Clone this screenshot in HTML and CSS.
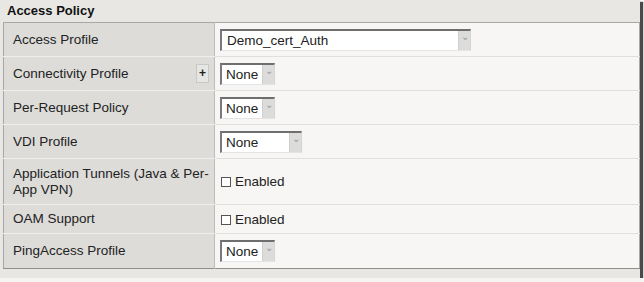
FILE: index.html
```html
<!DOCTYPE html>
<html lang="en">
<head>
  <meta charset="UTF-8" />
  <title>Access Policy</title>
  <link rel="stylesheet" href="styles.css">
</head>
<body>

<div class="panel">
  <h3 class="panel-title">Access Policy</h3>
  <table class="settings">
    <tr class="row">
      <td class="label">Access Profile</td>
      <td class="value">
        <span class="select wide">Demo_cert_Auth<span class="arrow">&#8964;</span></span>
      </td>
    </tr>
    <tr class="row">
      <td class="label">
        <div class="label-flex">Connectivity Profile <span class="plus">+</span></div>
      </td>
      <td class="value">
        <span class="select">None<span class="arrow">&#8964;</span></span>
      </td>
    </tr>
    <tr class="row">
      <td class="label">Per-Request Policy</td>
      <td class="value">
        <span class="select">None<span class="arrow">&#8964;</span></span>
      </td>
    </tr>
    <tr class="row">
      <td class="label">VDI Profile</td>
      <td class="value">
        <span class="select mid">None<span class="arrow">&#8964;</span></span>
      </td>
    </tr>
    <tr class="row tall">
      <td class="label">Application Tunnels (Java &amp; Per-App VPN)</td>
      <td class="value"><span class="check"></span>Enabled</td>
    </tr>
    <tr class="row short">
      <td class="label">OAM Support</td>
      <td class="value"><span class="check"></span>Enabled</td>
    </tr>
    <tr class="row last">
      <td class="label">PingAccess Profile</td>
      <td class="value">
        <span class="select">None<span class="arrow">&#8964;</span></span>
      </td>
    </tr>
  </table>
</div>

</body>
</html>
```

FILE: styles.css
```css
body { margin: 0; background: #f4f4f2; font-family: "Liberation Sans", Arial, sans-serif; color: #222; }

.panel {
  width: 637px; padding: 0 0 9px 3px;
  background: #e8e7e3;
  box-shadow: 3px 2px 1px #4a4a4a;
}
.panel-title {
  margin: 0; height: 22px; line-height: 22px;
  padding-left: 4px; font-size: 13px; font-weight: bold; color: #111;
}

.settings {
  width: 637px; border-collapse: collapse;
  border: 1px solid #a8a8a6; border-bottom-color: #8e8e8c;
  font-size: 13.5px;
}
.row { height: 34px; }
.row.tall { height: 46px; }
.row.short { height: 29px; }
.row.last { height: 35px; }

.label {
  width: 196px; padding: 0 5px 0 9px;
  background: #dddcd9; border-right: 1px solid #bcbcba;
  border-bottom: 1px solid #efefed;
  line-height: 16px;
}
.value {
  padding: 0 0 0 5px;
  background: #f7f6f4;
  border-bottom: 1px solid #dfdfdd;
}
.row.last .label, .row.last .value { border-bottom: none; }

.label-flex { display: flex; align-items: center; justify-content: space-between; }
.plus {
  width: 11px; height: 17px; line-height: 17px; text-align: center;
  background: #e6e6e4; border: 1px solid #c8c8c6;
  font-weight: bold; font-size: 12px;
}

.select {
  display: inline-flex; align-items: center; justify-content: space-between;
  box-sizing: border-box; width: 55px; height: 22px;
  padding-left: 4px; vertical-align: middle;
  background: #fff;
  border-top: 2px solid #6e6e6e; border-left: 2px solid #7a7a7a;
  border-right: 1px solid #d4d4d4; border-bottom: 1px solid #e4e4e4;
}
.select.wide { width: 251px; padding-left: 5px; }
.select.mid { width: 82px; }
.arrow {
  width: 11px; height: 19px; line-height: 12px; text-align: center;
  background: #dcdcdb; border-left: 1px solid #cfcfcf;
  color: #999; font-size: 10px;
}

.check {
  display: inline-block; width: 8px; height: 8px; margin: 0 4px 0 1px;
  border: 1px solid #555; background: #fff; vertical-align: -1px;
}
```
